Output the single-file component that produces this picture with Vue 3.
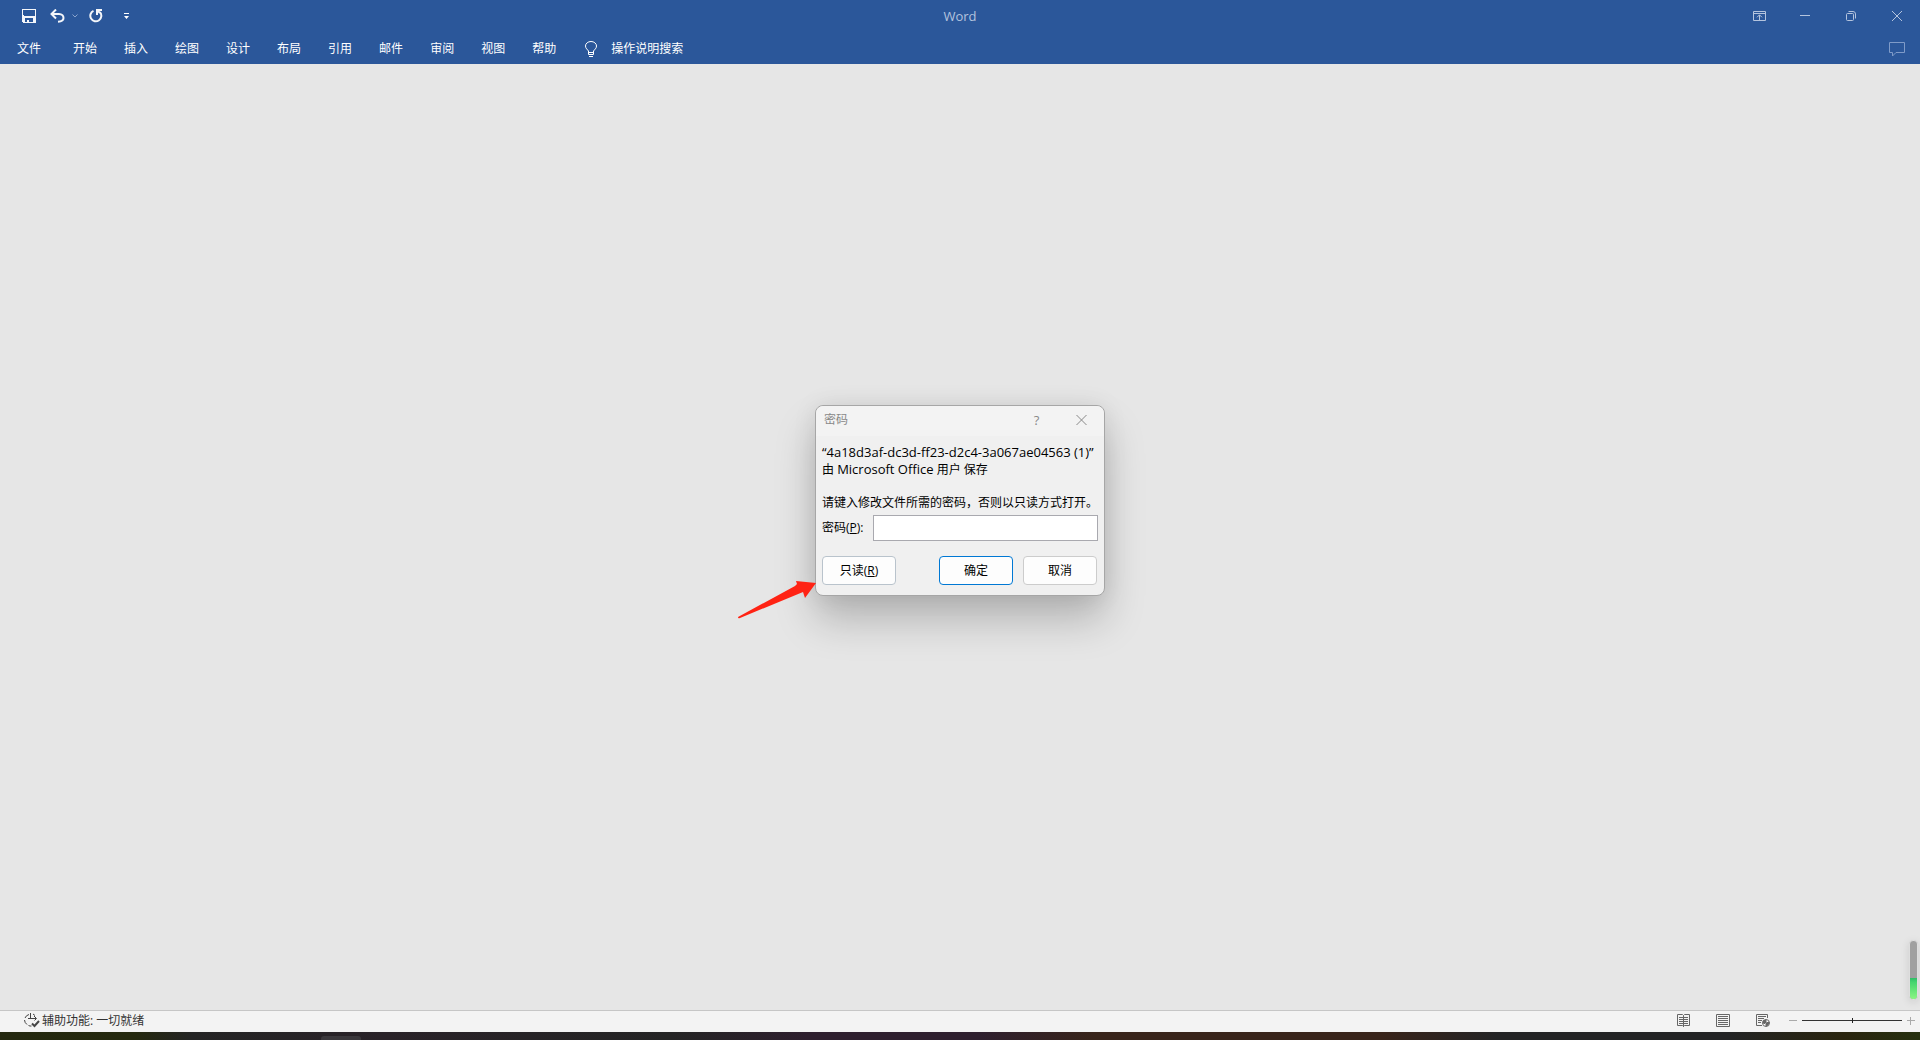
<script setup>
import { ref } from 'vue'

const tabs = ['开始', '插入', '绘图', '设计', '布局', '引用', '邮件', '审阅', '视图', '帮助']
const password = ref('')
const zoom = ref(50)
</script>

<template>
  <div class="window">
    <header class="ribbon">
      <div class="titlebar">
        <div class="quick">
          <button class="icon save" type="button" aria-label="保存">
            <svg width="14" height="14" viewBox="0 0 14 14" shape-rendering="crispEdges">
              <path fill="#f4f6fa" fill-rule="evenodd" d="M0 0H14V14H1L0 13ZM1 1V6L2 7H12L13 6V1ZM3 9V13H5V11H7V13H11V9Z" />
            </svg>
          </button>
          <button class="icon undo" type="button" aria-label="撤消">
            <svg width="15" height="14" viewBox="0 0 15 14" fill="none" stroke="#f4f6fa" stroke-width="2">
              <path d="M6 0.500L1.500 5L6 9.500M2 5H9C12 5 13.500 7 13.500 9C13.500 11.500 11.500 12.500 8 12.800" />
            </svg>
          </button>
          <button class="icon caret" type="button" aria-label="撤消选项">
            <svg width="6" height="4" viewBox="0 0 6 4" fill="none" stroke="#8aa4cd"><path d="M0.500 0.500L3 3L5.500 0.500" /></svg>
          </button>
          <button class="icon redo" type="button" aria-label="重复">
            <svg width="14" height="14" viewBox="0 0 14 14" fill="none" stroke="#f4f6fa" stroke-width="2">
              <path d="M4.500 1.800A5.500 5.500 0 1 0 11 3.200" /><path d="M8 6V1H13M8.500 1.500L11 4" />
            </svg>
          </button>
          <button class="icon more" type="button" aria-label="自定义快速访问工具栏">
            <svg width="5" height="6" viewBox="0 0 5 6" fill="#fff"><path d="M0 0H5V1H0ZM0 3H5L2.500 6Z" /></svg>
          </button>
        </div>
        <h1>Word</h1>
        <div class="controls">
          <button class="icon" type="button" aria-label="功能区显示选项">
            <svg width="13" height="10" viewBox="0 0 13 10" fill="none" stroke="#b4c4de">
              <path d="M0.500 0.500H12.500V9.500H0.500ZM0 2.500H13M6.500 9V4M4 6.300L6.500 3.800L9 6.300" />
            </svg>
          </button>
          <button class="icon" type="button" aria-label="最小化">
            <svg width="10" height="10" viewBox="0 0 10 10"><path stroke="#b4c4de" d="M0 4.500H10" /></svg>
          </button>
          <button class="icon" type="button" aria-label="还原">
            <svg width="10" height="10" viewBox="0 0 10 10" fill="none" stroke="#b4c4de">
              <rect x="0.500" y="2.500" width="7" height="7" rx="1" /><path d="M2.500 0.500H7Q9.500 0.500 9.500 3V7.500" />
            </svg>
          </button>
          <button class="icon" type="button" aria-label="关闭">
            <svg width="10" height="10" viewBox="0 0 10 10"><path stroke="#b4c4de" d="M0 0L10 10M10 0L0 10" /></svg>
          </button>
        </div>
      </div>
      <nav class="tabs">
        <button class="file" type="button">文件</button>
        <button v-for="tab in tabs" :key="tab" type="button">{{ tab }}</button>
        <button class="tell" type="button">
          <svg width="12" height="16" viewBox="0 0 12 16" fill="none" stroke="#fff">
            <path d="M3.500 11.500V10C2.500 8.500 0.500 7.500 0.500 5A5.500 4.500 0 0 1 11.500 5C11.500 7.500 9.500 8.500 8.500 10V11.500ZM3.500 11V13.500H8.500V11M4 15.500H8" />
          </svg>
          <span>操作说明搜索</span>
        </button>
        <button class="comment" type="button" aria-label="批注">
          <svg width="16" height="15" viewBox="0 0 16 15" fill="none" stroke="#7f9bc8">
            <path d="M0.500 0.500H15.500V10.500H7L3.500 14V10.500H0.500Z" />
          </svg>
        </button>
      </nav>
    </header>

    <main class="workspace">
      <form class="dialog" role="dialog" aria-labelledby="dialog-title" @submit.prevent>
        <div class="dialog-head">
          <h2 id="dialog-title">密码</h2>
          <button class="icon" type="button" aria-label="帮助">?</button>
          <button class="icon" type="button" aria-label="关闭">
            <svg width="11" height="10" viewBox="0 0 11 10"><path stroke="#888" d="M0.500 0L10.500 10M10.500 0L0.500 10" /></svg>
          </button>
        </div>
        <div class="dialog-body">
          <p class="source"><span>“4a18d3af-dc3d-ff23-d2c4-3a067ae04563 (1)”</span><br>由 <span>Microsoft Office</span> 用户 保存</p>
          <p class="hint">请键入修改文件所需的密码，否则以只读方式打开。</p>
          <div class="field">
            <label for="password">密码(<u>P</u>):</label>
            <input id="password" v-model="password" type="password">
          </div>
          <div class="actions">
            <button class="push readonly" type="button">只读(<u>R</u>)</button>
            <button class="push primary" type="submit">确定</button>
            <button class="push" type="button">取消</button>
          </div>
        </div>
        <svg class="arrow" width="78" height="39" viewBox="0 0 78 39" aria-hidden="true">
          <path fill="#ff2314" d="M0 37L57 6L59 4L58 1L78 3L67 18L65 12L2 38Q0 39 0 37Z" />
        </svg>
      </form>
      <div class="meter" aria-hidden="true"><i></i></div>
    </main>

    <footer class="status">
      <button class="access" type="button">
        <svg width="16" height="15" viewBox="0 0 16 15" fill="none" stroke="#444">
          <path d="M5 1.500A6 6 0 0 0 1 5M0.500 7A6 6 0 0 0 3 11.500M4.500 12.500Q6 13.300 7.500 13M6.500 0V6M4 5.500H12M10 3L12.500 5.500L10.500 7.500M11 2.500L9 1" />
          <path stroke-width="2" d="M8 10.500L10.500 13L15 8" />
        </svg>
        <span>辅助功能: 一切就绪</span>
      </button>
      <div class="views">
        <button class="icon" type="button" aria-label="阅读视图">
          <svg width="13" height="13" viewBox="0 0 13 13" fill="none" stroke="#666">
            <path d="M6.500 1.500L5.500 0.500H0.500V11.500H5.500L6.500 12.500L7.500 11.500H12.500V0.500H7.500L6.500 1.500V13M2 3.500H6M2 5.500H6M2 7.500H6M2 9.500H6M7 3.500H11M7 5.500H11M7 7.500H11M7 9.500H11" />
          </svg>
        </button>
        <button class="icon" type="button" aria-label="页面视图">
          <svg width="14" height="13" viewBox="0 0 14 13" fill="none" stroke="#666">
            <path d="M0.500 0.500H13.500V12.500H0.500ZM2 2.500H12M2 4.500H12M2 6.500H12M2 8.500H12M2 10.500H12" />
          </svg>
        </button>
        <button class="icon" type="button" aria-label="Web 版式视图">
          <svg width="14" height="13" viewBox="0 0 14 13" fill="none" stroke="#666">
            <path d="M11.500 4V0.500H0.500V11.500H6M2 2.500H10M2 4.500H8M2 6.500H6M2 8.500H5" />
            <circle cx="10" cy="9" r="3.500" fill="#fff" /><path fill="#666" d="M7 7L10 6L10 8L8 10ZM10 9L13 8L12 11L10 12Z" />
          </svg>
        </button>
      </div>
      <div class="zoom">
        <button class="icon" type="button" aria-label="缩小">
          <svg width="8" height="8" viewBox="0 0 8 8"><path stroke="#aaa" d="M0 3.500H8" /></svg>
        </button>
        <input v-model="zoom" type="range" min="0" max="100" aria-label="显示比例">
        <button class="icon" type="button" aria-label="放大">
          <svg width="8" height="8" viewBox="0 0 8 8"><path stroke="#aaa" d="M0 3.500H8M3.500 0V8" /></svg>
        </button>
      </div>
    </footer>
    <div class="taskbar"><i></i></div>
  </div>
</template>

<style>
body {
  margin: 0;
}
</style>

<style scoped>
.window {
  display: flex;
  flex-direction: column;
  min-height: 100vh;
  background: #e6e6e6;
  font: 12px/16px "Open Sans", "Noto Sans CJK SC", sans-serif;
  color: #000;
}

button {
  margin: 0;
  padding: 0;
  border: 0;
  background: none;
  color: inherit;
  font: inherit;
}

h1,
h2,
p {
  margin: 0;
  font-size: 12px;
  font-weight: 400;
}

svg {
  display: block;
}

.icon {
  display: flex;
  align-items: center;
  justify-content: center;
}

.ribbon {
  background: #2b579a;
  color: #fff;
}

.titlebar {
  display: grid;
  grid-template-columns: 1fr auto 1fr;
  align-items: center;
  height: 32px;
}

.titlebar h1 {
  color: #b4c4de;
  font-size: 13px;
}

.quick {
  display: flex;
  align-items: center;
  padding-left: 22px;
}

.undo {
  margin-left: 14px;
}

.caret {
  margin-left: 7px;
}

.redo {
  margin-left: 11px;
}

.more {
  margin-left: 21px;
}

.controls {
  display: flex;
  justify-content: flex-end;
  height: 30px;
}

.controls .icon {
  width: 46px;
}

.tabs {
  display: flex;
  align-items: center;
  gap: 27px;
  box-sizing: border-box;
  height: 32px;
  padding: 2px 15px 0 17px;
}

.file {
  margin-right: 5px;
}

.tell {
  display: flex;
  align-items: center;
  gap: 14px;
  margin-left: 2px;
}

.comment {
  margin-left: auto;
}

.workspace {
  position: relative;
  display: flex;
  flex: 1;
  align-items: center;
  justify-content: center;
  padding-bottom: 73px;
}

.dialog {
  position: relative;
  width: 288px;
  border: 1px solid #a6a6a6;
  border-radius: 8px;
  background: #f0f0f0;
  box-shadow: 0 24px 40px rgba(0, 0, 0, 0.22), 0 0 24px rgba(0, 0, 0, 0.08);
}

.dialog-head {
  display: flex;
  height: 30px;
  padding-left: 8px;
  border-radius: 8px 8px 0 0;
  background: #f3f3f3;
  color: #888;
}

.dialog-head h2 {
  flex: 1;
  line-height: 28px;
}

.dialog-head .icon {
  width: 45px;
  height: 28px;
  font-size: 13px;
}

.dialog-body {
  padding: 8px 6px 10px;
}

.source {
  line-height: 17px;
  white-space: nowrap;
}

.source span {
  font-size: 13px;
}

.hint {
  margin-top: 16px;
  line-height: 18px;
  white-space: nowrap;
}

.field {
  display: flex;
  align-items: center;
  margin-top: 3px;
}

.field label {
  width: 51px;
}

.field input {
  flex: 1;
  box-sizing: border-box;
  min-width: 0;
  height: 26px;
  padding: 0 4px;
  border: 1px solid #a9a9af;
  background: #fff;
  font: inherit;
}

.actions {
  display: flex;
  gap: 10px;
  margin-top: 15px;
  padding-right: 1px;
}

.push {
  width: 74px;
  height: 29px;
  border: 1px solid #ccc;
  border-radius: 4px;
  background: #fdfdfd;
}

.readonly {
  margin-right: auto;
  border-color: #b9c3cc;
}

.primary {
  border-color: #0078d4;
}

.arrow {
  position: absolute;
  right: 100%;
  bottom: -24px;
}

.meter {
  position: absolute;
  right: 2px;
  bottom: 10px;
  width: 7px;
  height: 58px;
  overflow: hidden;
  border: 1px solid #dedede;
  border-radius: 4px;
  background: #a0a0a0;
  box-shadow: 0 2px 8px rgba(0, 0, 0, 0.12);
}

.meter i {
  display: block;
  height: 21px;
  margin-top: 37px;
  background: linear-gradient(#2fbd67, #45d56e 20%, #8bf584);
}

.status {
  display: flex;
  align-items: center;
  box-sizing: border-box;
  height: 22px;
  padding: 0 5px 2px 24px;
  border-top: 1px solid #c6c6c6;
  background: #f3f3f3;
  color: #333;
}

.access {
  display: flex;
  align-items: center;
  gap: 2px;
}

.views {
  display: flex;
  gap: 26px;
  margin-left: auto;
}

.zoom {
  display: flex;
  align-items: center;
  gap: 5px;
  margin-left: 19px;
}

.zoom input {
  width: 100px;
  height: 13px;
  margin: 0;
  appearance: none;
  background: linear-gradient(#333, #333) center / 100% 1px no-repeat;
}

.zoom input::-webkit-slider-thumb {
  appearance: none;
  width: 1px;
  height: 5px;
  background: #222;
}

.taskbar {
  display: flex;
  align-items: flex-end;
  height: 8px;
  background: linear-gradient(90deg, #24280f, #25290f 7%, #242424 10%, #292228 20%, #242424 35%, #2e1f2e 42%, #2e1f2e 51%, #38241a 57%, #38241a 72%, #232425 78%, #232425 90%, #2a250f 96%, #263010);
}

.taskbar i {
  width: 40px;
  height: 4px;
  margin-left: 321px;
  border-radius: 3px 3px 0 0;
  background: #3a373b;
}
</style>
